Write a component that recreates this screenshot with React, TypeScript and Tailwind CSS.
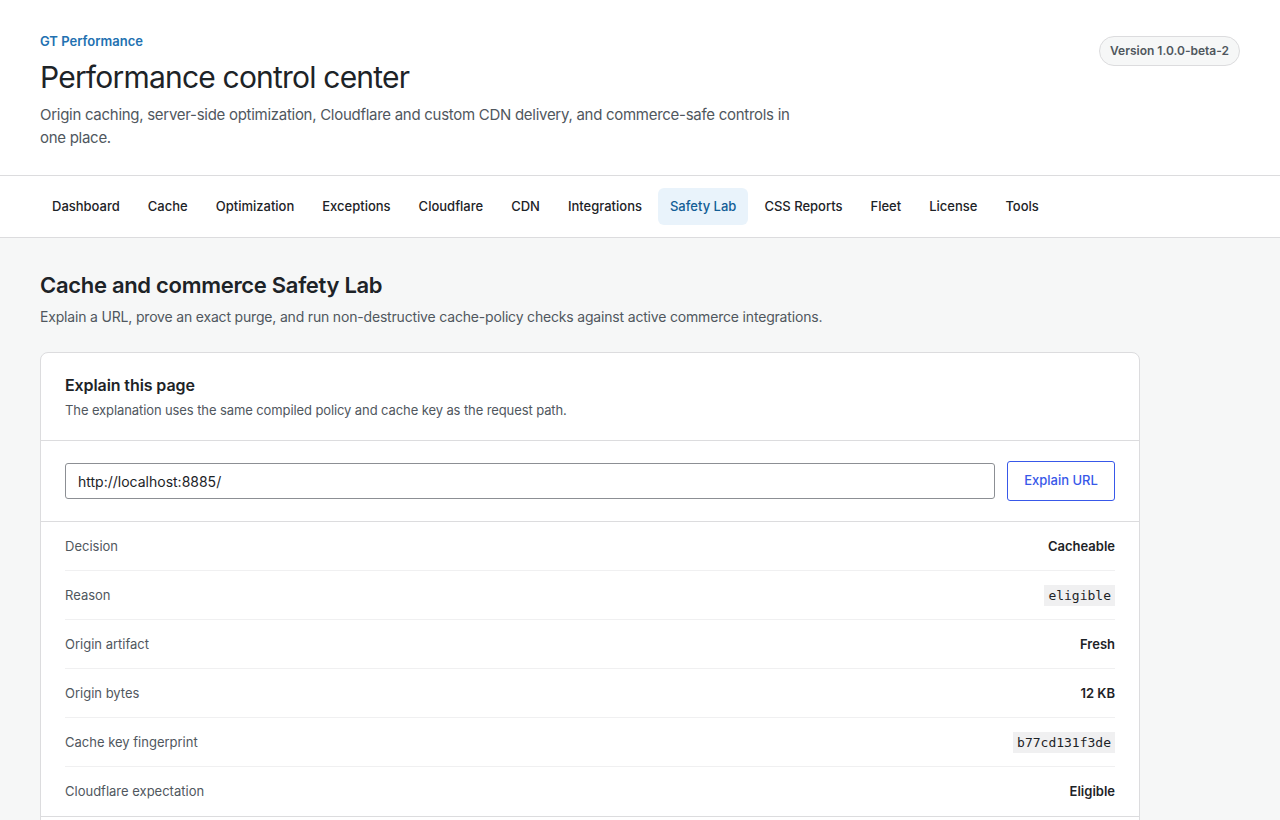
import React from "react";

const tabs = ["Dashboard","Cache","Optimization","Exceptions","Cloudflare","CDN","Integrations","Safety Lab","CSS Reports","Fleet","License","Tools"];

const rows: { label: string; value: string; code?: boolean }[] = [
  { label: "Decision", value: "Cacheable" },
  { label: "Reason", value: "eligible", code: true },
  { label: "Origin artifact", value: "Fresh" },
  { label: "Origin bytes", value: "12 KB" },
  { label: "Cache key fingerprint", value: "b77cd131f3de", code: true },
  { label: "Cloudflare expectation", value: "Eligible" },
];

export default function App() {
  return (
    <div className="min-h-screen bg-[#f6f7f7] text-[#1d2327]" style={{ fontFamily: "Inter, 'Noto Sans', sans-serif" }}>
      <header className="bg-white border-b border-[#dcdcde] px-10 pt-[33px] pb-[26px] flex justify-between items-start">
        <div>
          <div className="text-[13px] font-semibold text-[#2271b1] leading-4">GT Performance</div>
          <h1 className="text-[30px] font-normal leading-[36px] mt-[10px] tracking-[-0.8px]">Performance control center</h1>
          <p className="text-[15px] leading-[23px] text-[#50575e] mt-[8px] max-w-[770px] tracking-[-0.28px]">
            Origin caching, server-side optimization, Cloudflare and custom CDN delivery, and commerce-safe controls in one place.
          </p>
        </div>
        <div className="mt-[3px] rounded-full border border-[#dcdcde] bg-[#f6f7f7] px-[10px] h-[30px] flex items-center text-[12px] font-semibold text-[#50575e]">
          Version 1.0.0-beta-2
        </div>
      </header>
      <nav className="bg-white border-b border-[#dcdcde] px-10 h-[62px] flex items-center gap-1">
        {tabs.map((t) => (
          <div
            key={t}
            className={
              "h-[37px] px-3 flex items-center rounded-md text-[13px] font-medium " +
              (t === "Safety Lab" ? "bg-[#e9f3fb] text-[#135e96]" : "text-[#1d2327]")
            }
          >
            {t}
          </div>
        ))}
      </nav>
      <main className="px-10 pt-[33px]">
        <h2 className="text-[22px] font-semibold leading-7 tracking-[-0.3px]">Cache and commerce Safety Lab</h2>
        <p className="text-[14px] leading-5 text-[#50575e] mt-[8px] tracking-[-0.18px]">
          Explain a URL, prove an exact purge, and run non-destructive cache-policy checks against active commerce integrations.
        </p>
        <section className="mt-[25px] w-[1100px] bg-white border border-[#dcdcde] rounded-lg">
          <div className="px-6 pt-[22px] pb-[21px] border-b border-[#dcdcde]">
            <h3 className="text-[16px] font-semibold leading-5 tracking-[-0.1px]">Explain this page</h3>
            <p className="text-[13px] leading-[18px] text-[#50575e] mt-[6px] tracking-[-0.1px]">
              The explanation uses the same compiled policy and cache key as the request path.
            </p>
          </div>
          <div className="px-6 h-[81px] flex items-center gap-3 border-b border-[#dcdcde]">
            <div className="flex-1 h-[36px] border border-[#8c8f94] rounded-[3px] px-3 flex items-center text-[14px]">
              http://localhost:8885/
            </div>
            <button className="w-[108px] h-[40px] border border-[#3858e9] rounded-[3px] text-[13px] font-medium text-[#3858e9] bg-white">
              Explain URL
            </button>
          </div>
          <div className="px-6 border-b border-[#dcdcde]">
            {rows.map((r, i) => (
              <div
                key={r.label}
                className={
                  "h-[49px] pt-[1px] flex items-center justify-between text-[13px] " +
                  (i < rows.length - 1 ? "border-b border-[#f0f0f1]" : "")
                }
              >
                <span className="text-[#50575e]">{r.label}</span>
                {r.code ? (
                  <span className="bg-[#f0f0f1] px-[4px] py-[1px] text-[13px] text-[#1d2327]" style={{ fontFamily: "'DejaVu Sans Mono', 'Liberation Mono', monospace" }}>
                    {r.value}
                  </span>
                ) : (
                  <span className="font-semibold text-[#1d2327]">{r.value}</span>
                )}
              </div>
            ))}
          </div>
          <div className="h-[48px]" />
        </section>
      </main>
    </div>
  );
}
